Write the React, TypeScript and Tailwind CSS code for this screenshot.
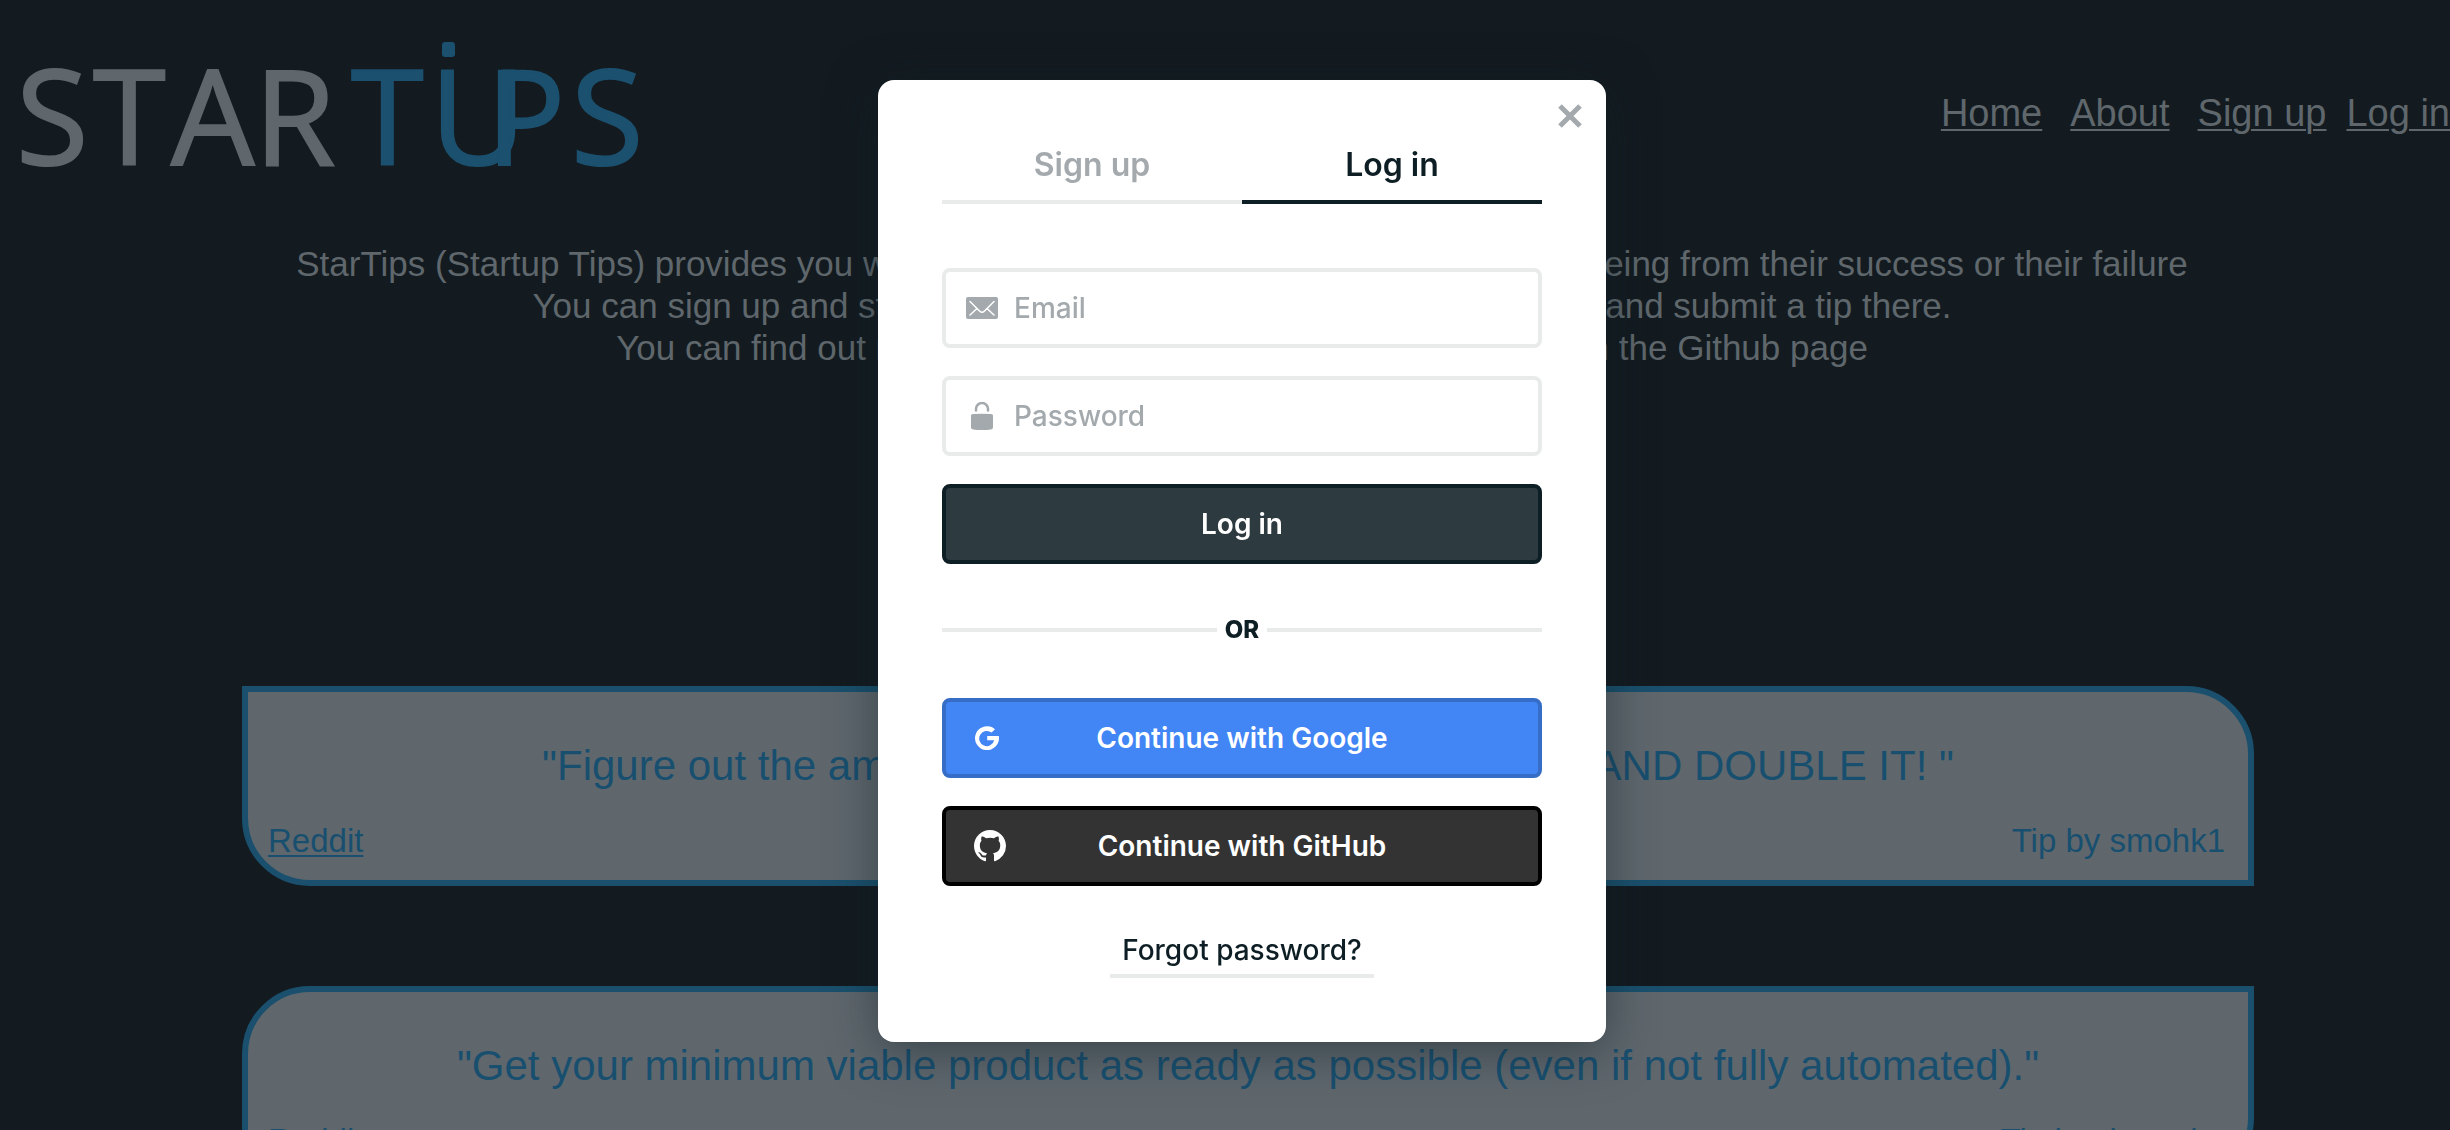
import React, { useState } from 'react';

interface Tip {
  quote: string;
  author: string;
  shape: string;
}

const tips: Tip[] = [
  {
    quote: '"Figure out the amount of hours you think it will take you AND DOUBLE IT! "',
    author: 'smohk1',
    shape: 'rounded-tr-[68px] rounded-bl-[68px]',
  },
  {
    quote: '"Get your minimum viable product as ready as possible (even if not fully automated)."',
    author: 'rinoanka',
    shape: 'rounded-tl-[68px] rounded-br-[68px]',
  },
];

const Logo: React.FC = () => (
  <svg width="660" height="170" viewBox="0 0 660 170" role="img" aria-label="StarTips" fontFamily='"Open Sans", sans-serif' fontSize="132" strokeWidth="2">
    <g fill="#5f676d" stroke="#5f676d">
      <text x="16" y="165">S</text>
      <text x="93" y="165">T</text>
      <text x="171" y="165">A</text>
      <text x="254" y="165">R</text>
    </g>
    <g fill="#1b506f" stroke="#1b506f">
      <text x="351" y="165">T</text>
      <text x="430" y="165">U</text>
      <text x="486" y="165">P</text>
      <text x="571" y="165">S</text>
      <rect x="443" y="43" width="11" height="13" rx="2" />
    </g>
  </svg>
);

const MailIcon: React.FC = () => (
  <svg width="32" height="22" viewBox="0 0 32 22" aria-hidden="true">
    <rect width="32" height="22" rx="2" fill="#a3a9ac" />
    <path d="M4 4.5L13.5 14Q16 16.500 18.500 14L28 4.500M4 18L11 11.500M28 18L21 11.500" fill="none" stroke="#fff" strokeWidth="1.500" strokeLinecap="round" />
  </svg>
);

const LockIcon: React.FC = () => (
  <svg width="32" height="28" viewBox="0 0 32 28" aria-hidden="true">
    <path d="M5 13.500Q5 12 7 12Q16 11.500 25 12Q27 12 27 13.500V25.500Q27 27.200 25 27.400Q16 28.400 7 27.400Q5 27.200 5 25.500Z" fill="#a3a9ac" />
    <path d="M10 8.500V7A6 6 0 0 1 22 7V8.500" fill="none" stroke="#a3a9ac" strokeWidth="2.500" strokeLinecap="round" />
  </svg>
);

const GoogleIcon: React.FC = () => (
  <svg width="24" height="24" viewBox="0 0 24 24" aria-hidden="true">
    <path d="M20 3.200L16.600 6.600A7.600 7.600 0 1 0 19.200 14.300H12.200V9.900H23.800A12 12 0 1 1 20 3.200Z" fill="#fff" />
  </svg>
);

const GitHubIcon: React.FC = () => (
  <svg width="32" height="32" viewBox="0 0 16 16" aria-hidden="true">
    <path
      fill="#fff"
      d="M8 0C3.58 0 0 3.58 0 8c0 3.54 2.29 6.53 5.47 7.59.4.07.55-.17.55-.38 0-.19-.01-.82-.01-1.49-2.01.37-2.53-.49-2.69-.94-.09-.23-.48-.94-.82-1.13-.28-.15-.68-.52-.01-.53.63-.01 1.08.58 1.23.82.72 1.21 1.87.87 2.33.66.07-.52.28-.87.51-1.07-1.78-.2-3.64-.89-3.64-3.95 0-.87.31-1.59.82-2.15-.08-.2-.36-1.02.08-2.12 0 0 .67-.21 2.2.82.64-.18 1.32-.27 2-.27s1.36.09 2 .27c1.53-1.04 2.2-.82 2.2-.82.44 1.1.16 1.92.08 2.12.51.56.82 1.27.82 2.15 0 3.07-1.87 3.75-3.65 3.95.29.25.54.73.54 1.48 0 1.07-.01 1.93-.01 2.2 0 .21.15.46.55.38A8.01 8.01 0 0 0 16 8c0-4.42-3.58-8-8-8z"
    />
  </svg>
);

const TipCard: React.FC<{ tip: Tip }> = ({ tip }) => (
  <article className={`h-[200px] border-6 border-[#1a506d] bg-[#5f676d] px-5 pt-[50px] text-[#184f6f] ${tip.shape}`}>
    <p className="text-center text-[42px] leading-[48px] whitespace-nowrap">{tip.quote}</p>
    <div className="mt-8 flex justify-between pr-[3px] text-[33px] leading-[38px]">
      <a href="#" className="underline decoration-2 underline-offset-[3px]">Reddit</a>
      <span>Tip by {tip.author}</span>
    </div>
  </article>
);

const LoginModal: React.FC = () => {
  const [tab, setTab] = useState<'signup' | 'login'>('login');
  const [email, setEmail] = useState('');
  const [password, setPassword] = useState('');

  const tabStyle = (active: boolean) =>
    active ? 'border-[#0e1e25] text-[#0e1e25]' : 'border-[#e9ebeb] text-[#a3a9ac]';

  return (
    <div
      role="dialog"
      aria-label="Log in"
      className="relative w-[728px] rounded-2xl bg-white p-16 font-['Inter',sans-serif] text-[28px] text-[#0e1e25] shadow-[0_8px_48px_rgba(14,30,37,0.5)]"
    >
      <button type="button" aria-label="Close" className="absolute top-6 right-6 text-[#a3a9ac]">
        <svg width="24" height="24" viewBox="0 0 24 24" aria-hidden="true">
          <path d="M2 2L22 22M22 2L2 22" stroke="currentColor" strokeWidth="5" />
        </svg>
      </button>

      <div className="flex text-[32px] leading-[42px] font-semibold">
        <button type="button" onClick={() => setTab('signup')} className={`flex-1 border-b-4 pb-[14px] ${tabStyle(tab === 'signup')}`}>
          Sign up
        </button>
        <button type="button" onClick={() => setTab('login')} className={`flex-1 border-b-4 pb-[14px] ${tabStyle(tab === 'login')}`}>
          Log in
        </button>
      </div>

      <form className="mt-16 flex flex-col gap-7" onSubmit={(e) => e.preventDefault()}>
        <label className="flex h-20 items-center gap-4 rounded-lg border-4 border-[#e9ebeb] px-5">
          <MailIcon />
          <input
            type="email"
            aria-label="Email"
            value={email}
            onChange={(e) => setEmail(e.target.value)}
            placeholder="Email"
            className="min-w-0 flex-1 font-medium outline-none placeholder:text-[#a3a9ac]"
          />
        </label>
        <label className="flex h-20 items-center gap-4 rounded-lg border-4 border-[#e9ebeb] px-5">
          <LockIcon />
          <input
            type="password"
            aria-label="Password"
            value={password}
            onChange={(e) => setPassword(e.target.value)}
            placeholder="Password"
            className="min-w-0 flex-1 font-medium outline-none placeholder:text-[#a3a9ac]"
          />
        </label>
        <button type="submit" className="h-20 rounded-lg border-4 border-[#0e1e25] bg-[#2d3b41] font-semibold text-white">
          Log in
        </button>
      </form>

      <div className="mt-12 mb-[50px] flex h-9 items-center gap-2 text-2xl font-extrabold">
        <span className="h-1 flex-1 bg-[#e9ebeb]" />
        OR
        <span className="h-1 flex-1 bg-[#e9ebeb]" />
      </div>

      <div className="flex flex-col gap-7 font-semibold text-white">
        <button type="button" className="relative h-20 rounded-lg border-4 border-[#366dc7] bg-[#4285f4]">
          <span className="absolute top-6 left-[29px]"><GoogleIcon /></span>
          Continue with Google
        </button>
        <button type="button" className="relative h-20 rounded-lg border-4 border-black bg-[#333333]">
          <span className="absolute top-5 left-7"><GitHubIcon /></span>
          Continue with GitHub
        </button>
      </div>

      <div className="mt-11 flex justify-center">
        <button type="button" className="border-b-4 border-[#e9ebeb] px-3 pb-1 leading-10 font-medium">
          Forgot password?
        </button>
      </div>
    </div>
  );
};

export default function App() {
  return (
    <div className="h-screen overflow-hidden bg-[#131b20] font-['Liberation_Sans',Arial,sans-serif] text-[#5f676c]">
      <header className="flex items-start justify-between">
        <Logo />
        <nav className="flex gap-7 pt-[91px] text-[38px] leading-[44px] whitespace-nowrap">
          <a href="#" className="underline decoration-2 underline-offset-[3px]">Home</a>
          <a href="#" className="underline decoration-2 underline-offset-[3px]">About</a>
          <div className="flex gap-5">
            <a href="#" className="underline decoration-2 underline-offset-[3px]">Sign up</a>
            <a href="#" className="underline decoration-2 underline-offset-[3px]">Log in</a>
          </div>
        </nav>
      </header>

      <p className="mt-[73px] pl-[34px] text-center text-[35px] leading-[42px]">
        StarTips (Startup Tips) provides you with brief tips from experienced entrepreneurs being from their success or their failure
        <br />
        You can sign up and start sharing right now, go to your account page and submit a tip there.
        <br />
        You can find out more about this website and how it was built on the Github page
      </p>

      <main className="mt-[317px] mr-[196px] ml-[242px] flex flex-col gap-[100px]">
        {tips.map((tip) => (
          <TipCard key={tip.author} tip={tip} />
        ))}
      </main>

      {/* Login dialog */}
      <div className="fixed inset-0 flex items-start justify-center pt-20 pl-[34px]">
        <LoginModal />
      </div>
    </div>
  );
}
